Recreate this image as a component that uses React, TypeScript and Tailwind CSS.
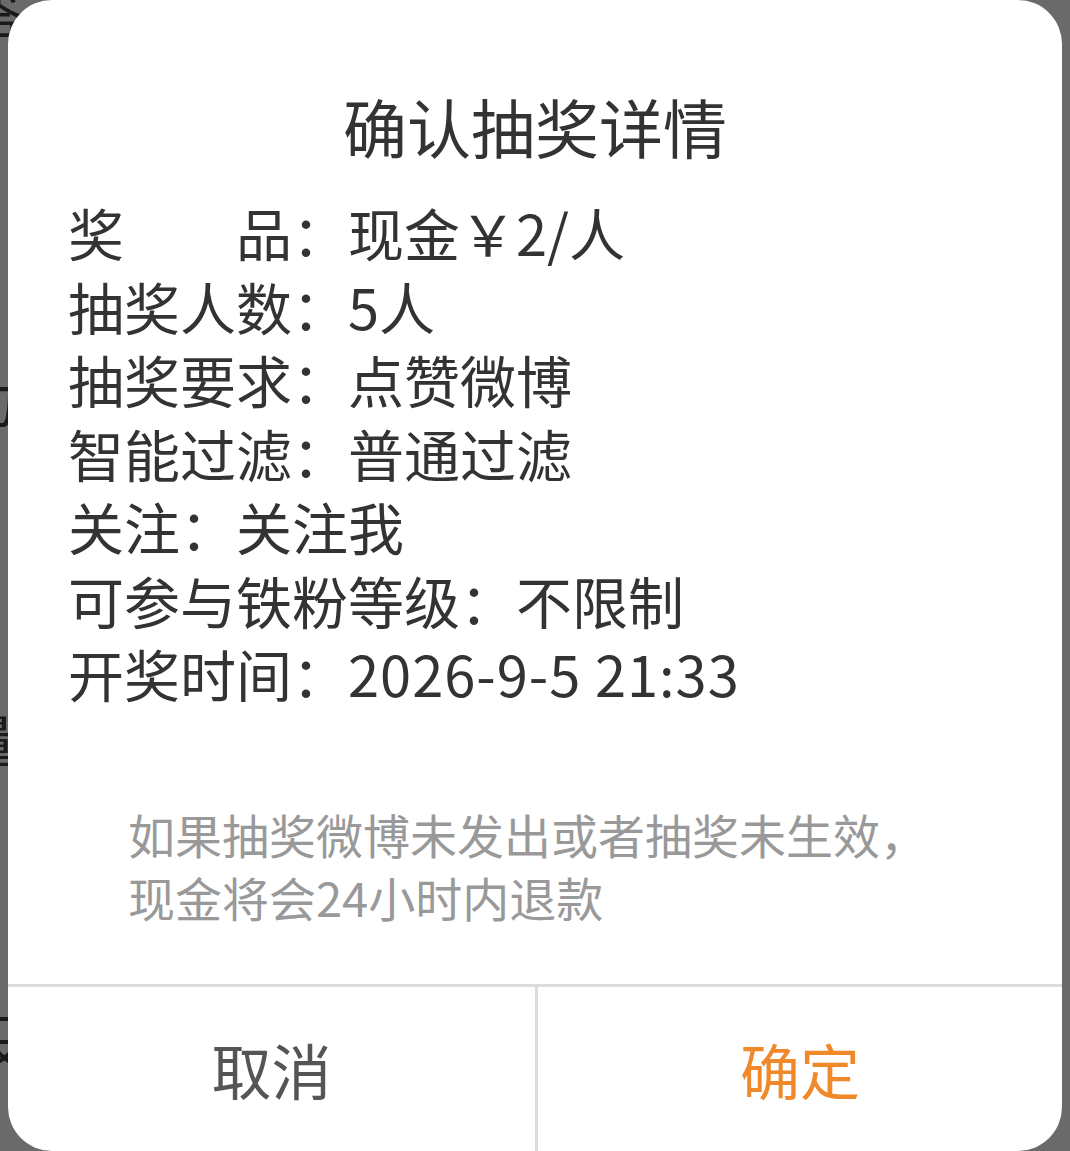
import React from "react";

const rows: [string, string, string][] = [
  ["奖\u3000\u3000品：", "现金￥2/人", ""],
  ["抽奖人数：", "5人", ""],
  ["抽奖要求：", "点赞微博", ""],
  ["智能过滤：", "普通过滤", ""],
  ["关注：", "关注我", ""],
  ["可参与铁粉等级：", "不限制", ""],
  ["开奖时间：", "2026-9-5 21:33", "tracking-[1px]"],
];

export default function App() {
  return (
    <div
      className="relative h-[1151px] w-full overflow-hidden bg-[#6a6a6a] px-[8px]"
      style={{ fontFamily: '"Noto Sans CJK SC", "Noto Sans", sans-serif' }}
    >
      <div className="absolute left-[-30px] top-[-18px] text-[56px] leading-none text-[#1a1a1a]">答</div>
      <div className="absolute left-[-38px] top-[370px] text-[56px] leading-none text-[#1a1a1a]">力</div>
      <div className="absolute left-[-40px] top-[710px] text-[56px] leading-none text-[#1a1a1a]">量</div>
      <div className="absolute left-[-32px] top-[1010px] text-[56px] leading-none text-[#1a1a1a]">设</div>
      <div className="relative flex h-full flex-col rounded-[44px] bg-white">
        <div className="pt-[85px] text-center text-[64px] leading-[80px] text-[#333333]">
          确认抽奖详情
        </div>
        <div className="mt-[30px] flex flex-col pl-[60px] text-[56px] leading-[73.5px] text-[#333333]">
          {rows.map(([k, v, t]) => (
            <div key={k} className="whitespace-nowrap">
              <span>{k}</span>
              <span className={t}>{v}</span>
            </div>
          ))}
        </div>
        <div className="mt-[92px] pl-[120px] pr-[40px] text-[47px] leading-[63px] text-[#999999]">
          <div className="whitespace-nowrap">如果抽奖微博未发出或者抽奖未生效，</div>
          <div className="whitespace-nowrap">现金将会24小时内退款</div>
        </div>
        <div className="mt-auto flex h-[167px] border-t-[3px] border-[#dcdcdc]">
          <div className="flex w-[530px] items-center justify-center border-r-[3px] border-[#dcdcdc] text-[60px] text-[#555555]">
            取消
          </div>
          <div className="flex flex-1 items-center justify-center text-[60px] text-[#f0892a]">
            确定
          </div>
        </div>
      </div>
    </div>
  );
}
